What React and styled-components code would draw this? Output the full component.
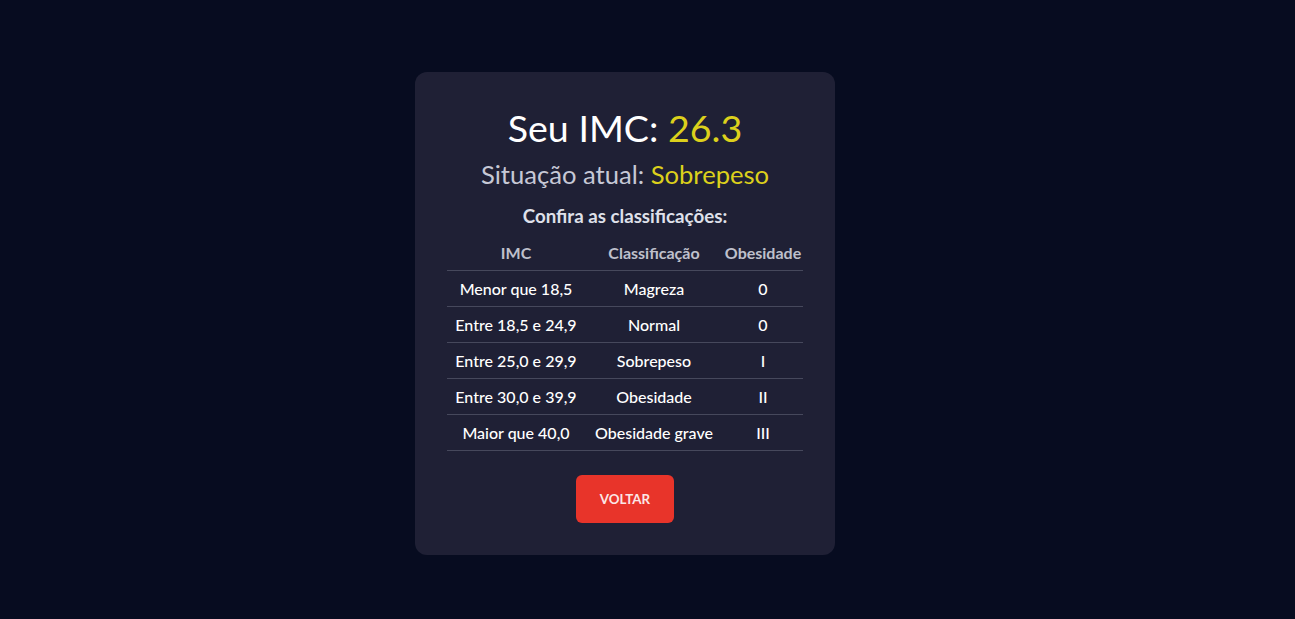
import React from 'react';
import styled, { createGlobalStyle } from 'styled-components';

const GlobalStyle = createGlobalStyle`
  * {
    box-sizing: border-box;
  }
  body {
    margin: 0;
    background: #070c20;
    font-family: Lato, "Noto Sans", sans-serif;
    color: #ffffff;
  }
`;

const Page = styled.main`
  min-height: 619px;
  display: flex;
  justify-content: center;
  align-items: flex-start;
  padding: 72px 45px 0 0;
`;

const Card = styled.section`
  width: 420px;
  background: #1f2035;
  border-radius: 12px;
  padding: 32px 32px 32px;
  display: flex;
  flex-direction: column;
  align-items: center;
`;

const Title = styled.h1`
  margin: 0;
  font-size: 37.6px;
  line-height: 48px;
  font-weight: 400;
  color: #ffffff;
`;

const Subtitle = styled.h2`
  margin: 7px 0 0;
  font-size: 25.6px;
  line-height: 31px;
  font-weight: 400;
  color: #c6c8d6;
`;

const Highlight = styled.span`
  color: #dcd01c;
`;

const TableTitle = styled.h3`
  margin: 15px 0 0;
  font-size: 18.72px;
  line-height: 22px;
  font-weight: 700;
  color: #dfe0ea;
`;

const Table = styled.table`
  width: 100%;
  margin-top: 7px;
  border-collapse: collapse;
  table-layout: fixed;
`;

const HeadCell = styled.th`
  width: ${(p) => p.$w}px;
  height: 36px;
  padding: 2px 0 0;
  font-size: 16px;
  font-weight: 700;
  color: #bfc0cc;
  text-align: center;
  white-space: nowrap;
  border-bottom: 1px solid #46485c;
`;

const Cell = styled.td`
  height: 36px;
  padding: 0;
  font-size: 16px;
  font-weight: 500;
  color: #ffffff;
  text-align: center;
  white-space: nowrap;
  border-bottom: 1px solid #46485c;
`;

const BackButton = styled.button`
  margin-top: 24px;
  width: 98px;
  height: 48px;
  border: none;
  border-radius: 6px;
  background: #e8342a;
  color: #fbe7e6;
  font-family: Lato, "Noto Sans", sans-serif;
  font-size: 13.33px;
  font-weight: 700;
  text-transform: uppercase;
  cursor: pointer;
`;

const rows = [
  ['Menor que 18,5', 'Magreza', '0'],
  ['Entre 18,5 e 24,9', 'Normal', '0'],
  ['Entre 25,0 e 29,9', 'Sobrepeso', 'I'],
  ['Entre 30,0 e 39,9', 'Obesidade', 'II'],
  ['Maior que 40,0', 'Obesidade grave', 'III'],
];

export default function App() {
  return (
    <>
      <GlobalStyle />
      <Page>
        <Card>
          <Title>
            Seu IMC: <Highlight>26.3</Highlight>
          </Title>
          <Subtitle>
            Situação atual: <Highlight>Sobrepeso</Highlight>
          </Subtitle>
          <TableTitle>Confira as classificações:</TableTitle>
          <Table>
            <thead>
              <tr>
                <HeadCell $w={138}>IMC</HeadCell>
                <HeadCell $w={138}>Classificação</HeadCell>
                <HeadCell $w={80}>Obesidade</HeadCell>
              </tr>
            </thead>
            <tbody>
              {rows.map((r) => (
                <tr key={r[0]}>
                  <Cell>{r[0]}</Cell>
                  <Cell>{r[1]}</Cell>
                  <Cell>{r[2]}</Cell>
                </tr>
              ))}
            </tbody>
          </Table>
          <BackButton>Voltar</BackButton>
        </Card>
      </Page>
    </>
  );
}
